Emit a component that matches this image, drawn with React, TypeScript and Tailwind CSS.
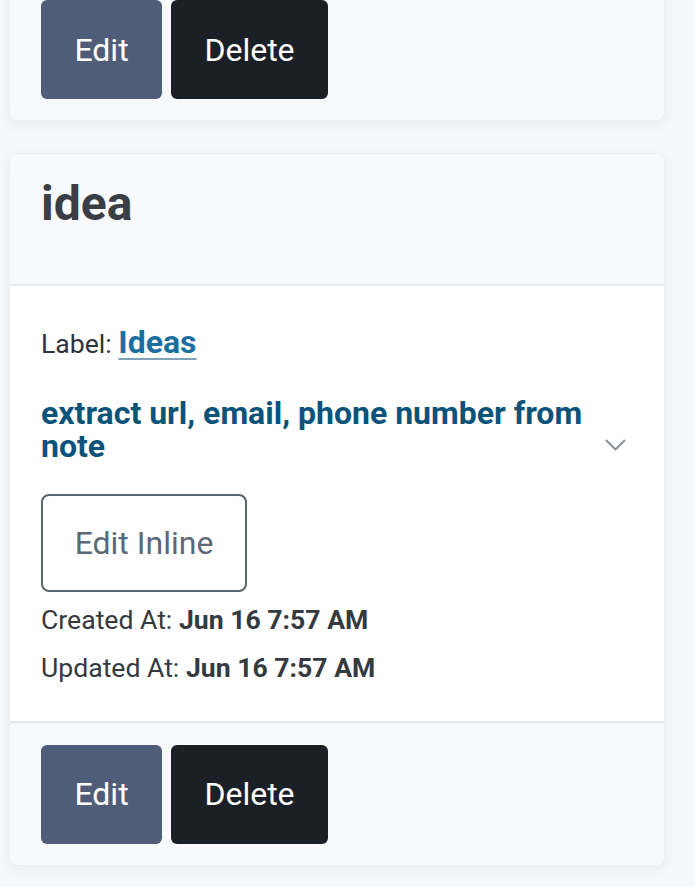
import React from "react";

function Buttons() {
  return (
    <div className="flex gap-[9px]">
      <button className="h-[99px] w-[121px] rounded-[6px] bg-[#4f5d79] text-[32px] text-white">Edit</button>
      <button className="h-[99px] w-[157px] rounded-[6px] bg-[#1b1f26] text-[32px] text-white">Delete</button>
    </div>
  );
}

export default function App() {
  return (
    <div className="min-h-[887px] w-[695px] overflow-hidden bg-[#f6f8fa] pl-[9px]" style={{ fontFamily: "Roboto, 'Noto Sans', sans-serif" }}>
      {/* previous card (only footer visible) */}
      <div className="-mt-[30px] w-[656px] rounded-[8px] border border-[#eceff2] bg-[#f8f9fa] px-[31px] pt-[29px] pb-[21px] shadow-[0_4px_14px_rgba(30,40,60,0.06)]">
        <Buttons />
      </div>

      {/* card */}
      <div className="mt-[32px] w-[656px] overflow-hidden rounded-[8px] border border-[#eceff2] bg-white shadow-[0_4px_14px_rgba(30,40,60,0.06)]">
        <div className="border-b-2 border-[#e6e9ec] bg-[#f8f9fa] px-[31px] pt-[21px] pb-[51px]">
          <h2 className="text-[48px] font-bold leading-[1.2] text-[#3a3f46]">idea</h2>
        </div>
        <div className="px-[31px] pt-[38px] pb-[29px]">
          <div className="flex items-baseline text-[26.6px] leading-[36px] text-[#2f343a]">
            <span>Label:&nbsp;</span>
            <a className="text-[32px] font-bold text-[#1a6fa0] underline decoration-[#7ea3b8] decoration-2 underline-offset-[5px]">Ideas</a>
          </div>
          <div className="mt-[35px] flex items-center justify-between">
            <div className="w-[565px] text-[32px] font-bold leading-[33px] text-[#0b5379]">
              extract url, email, phone number from note
            </div>
            <svg className="mr-[7px] mt-[32px]" width="21" height="13" viewBox="0 0 21 13" fill="none">
              <path d="M1.5 1.5 L10.5 10.5 L19.5 1.5" stroke="#8a9099" strokeWidth="2" strokeLinecap="round" strokeLinejoin="round" />
            </svg>
          </div>
          <button className="mt-[31px] h-[98px] w-[206px] rounded-[8px] border-2 border-[#5c6470] text-[32px] text-[#5d6876]">Edit Inline</button>
          <div className="mt-[4px] text-[26.6px] leading-[48px] text-[#343a40]">
            <div>Created At: <span className="font-bold">Jun 16 7:57 AM</span></div>
            <div>Updated At: <span className="font-bold">Jun 16 7:57 AM</span></div>
          </div>
        </div>
        <div className="border-t-2 border-[#e6e9ec] bg-[#f8f9fa] px-[31px] pt-[22px] pb-[21px]">
          <Buttons />
        </div>
      </div>
    </div>
  );
}
